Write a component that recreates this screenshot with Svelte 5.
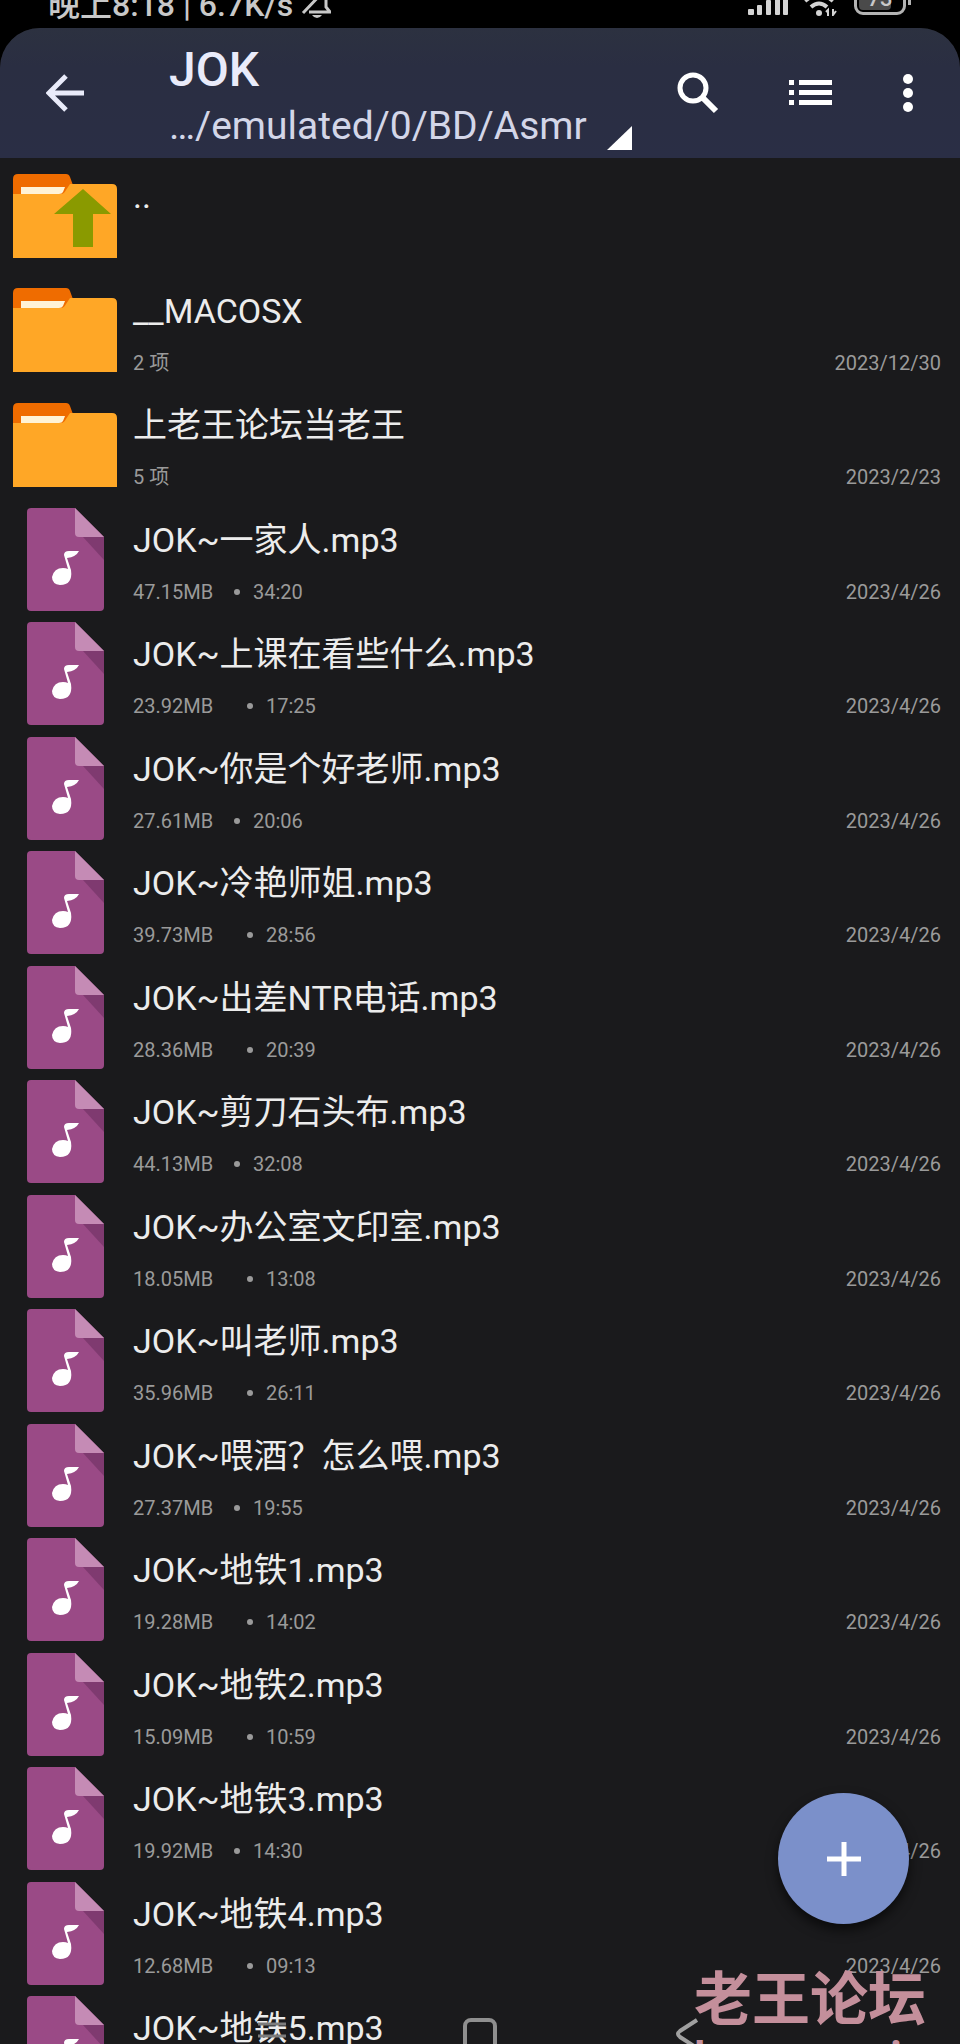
<script>
  const folders = [
    { name: '__MACOSX', count: '2 项', date: '2023/12/30' },
    { name: '上老王论坛当老王', count: '5 项', date: '2023/2/23' }
  ];

  const tracks = [
    { name: 'JOK~一家人.mp3', size: '47.15MB', time: '34:20' },
    { name: 'JOK~上课在看些什么.mp3', size: '23.92MB', time: '17:25', wide: true },
    { name: 'JOK~你是个好老师.mp3', size: '27.61MB', time: '20:06' },
    { name: 'JOK~冷艳师姐.mp3', size: '39.73MB', time: '28:56', wide: true },
    { name: 'JOK~出差NTR电话.mp3', size: '28.36MB', time: '20:39', wide: true },
    { name: 'JOK~剪刀石头布.mp3', size: '44.13MB', time: '32:08' },
    { name: 'JOK~办公室文印室.mp3', size: '18.05MB', time: '13:08', wide: true },
    { name: 'JOK~叫老师.mp3', size: '35.96MB', time: '26:11', wide: true },
    { name: 'JOK~喂酒？怎么喂.mp3', size: '27.37MB', time: '19:55' },
    { name: 'JOK~地铁1.mp3', size: '19.28MB', time: '14:02', wide: true },
    { name: 'JOK~地铁2.mp3', size: '15.09MB', time: '10:59', wide: true },
    { name: 'JOK~地铁3.mp3', size: '19.92MB', time: '14:30' },
    { name: 'JOK~地铁4.mp3', size: '12.68MB', time: '09:13', wide: true },
    { name: 'JOK~地铁5.mp3' }
  ];
  const trackDate = '2023/4/26';
</script>

{#snippet folderIcon(up)}
  <svg class="folder" viewBox="0 0 104 84" aria-hidden="true">
    <path d="M0 30V5Q0 0 5 0H53Q56 0 57 3L61 14V30Z" fill="#ef6c00" />
    <path d="M0 20H48Q51 20 53 16L57 10H99Q104 10 104 15V84H0Z" fill="#ffa726" />
    <path d="M8 13H52L50 18Q49 20 46 20H8Z" fill="#fff3d6" />
    {#if up}
      <path d="M70 15L98 40H80V73H60V40H41Z" fill="#8a9a00" />
    {/if}
  </svg>
{/snippet}

{#snippet musicIcon()}
  <svg class="music" viewBox="0 0 77 103" aria-hidden="true">
    <path d="M4 0H48L77 29V99Q77 103 73 103H4Q0 103 0 99V4Q0 0 4 0Z" fill="#9a4a86" />
    <path d="M56 29H77V52Z" fill="#7f3a70" />
    <path d="M48 0L77 29H52Q48 29 48 25Z" fill="#c58bb5" />
    <path d="M37 47Q37 43 42 43H52Q49 49 40 50L44 62Q46 77 33 77Q25 76 25 69Q27 60 36 60Q39 60 41 61L37 47Z" fill="#fff" />
  </svg>
{/snippet}

<div class="screen">
  <div class="status">
    <div class="status-side">
      <span>晚上8:18 | 6.7K/s</span>
      <svg class="bell" width="30" height="28" viewBox="0 0 30 28" aria-hidden="true">
        <path d="M8 22H29L25 17V9Q23 2 16 2M2 23L22 2" fill="none" stroke="#c8c8c8" stroke-width="3" />
        <path d="M11 25H21Q19 28 16 28Q13 28 11 25Z" fill="#c8c8c8" />
      </svg>
    </div>
    <div class="status-side right">
      <svg width="40" height="28" viewBox="0 0 40 28" aria-hidden="true" fill="#d4d4d4">
        <rect x="0" y="21" width="6" height="6" rx="1" /><rect x="9" y="17" width="5" height="10" rx="1" />
        <rect x="18" y="12" width="5" height="15" rx="1" /><rect x="27" y="6" width="5" height="21" rx="1" />
        <rect x="35" y="0" width="5" height="27" rx="1" />
      </svg>
      <svg width="34" height="28" viewBox="0 0 34 28" aria-hidden="true">
        <path d="M1 13Q15 1 29 13M7 19Q15 12 23 19" fill="none" stroke="#d4d4d4" stroke-width="4" />
        <circle cx="15" cy="25" r="3" fill="#d4d4d4" />
        <path d="M24 28V22L22 24M29 21V27L32 23" fill="none" stroke="#d4d4d4" stroke-width="2" />
      </svg>
      <span class="battery"><span class="level"></span><b>73</b></span>
    </div>
  </div>

  <header>
    <button class="back" aria-label="返回">
      <svg width="38" height="38" viewBox="0 0 38 38" aria-hidden="true">
        <path d="M38 19H4M20 2L3 19L20 36" fill="none" stroke="#e9ebfa" stroke-width="5" />
      </svg>
    </button>
    <div class="heading">
      <h1>JOK</h1>
      <button class="path">
        <span>…/emulated/0/BD/Asmr</span>
        <svg width="25" height="24" viewBox="0 0 25 24" aria-hidden="true"><path d="M25 0V24H0Z" fill="#fff" /></svg>
      </button>
    </div>
    <div class="tools">
      <button aria-label="搜索">
        <svg width="42" height="42" viewBox="0 0 42 42" aria-hidden="true">
          <circle cx="16" cy="16" r="13" fill="none" stroke="#fff" stroke-width="5" />
          <path d="M25 25L39 39" stroke="#fff" stroke-width="6" />
        </svg>
      </button>
      <button aria-label="列表视图">
        <svg width="43" height="26" viewBox="0 0 43 26" aria-hidden="true" fill="#fff">
          <path d="M0 0H5V5H0ZM10 0H43V5H10ZM0 10H5V15H0ZM10 10H43V15H10ZM0 20H5V25H0ZM10 20H43V25H10Z" />
        </svg>
      </button>
      <button aria-label="更多">
        <svg width="12" height="38" viewBox="0 0 12 38" aria-hidden="true" fill="#fff">
          <circle cx="6" cy="5" r="5" /><circle cx="6" cy="19" r="5" /><circle cx="6" cy="33" r="5" />
        </svg>
      </button>
    </div>
  </header>

  <ul>
    <li>
      <span class="icon">{@render folderIcon(true)}</span>
      <div class="info"><span class="name">..</span></div>
    </li>
    {#each folders as f}
      <li>
        <span class="icon">{@render folderIcon(false)}</span>
        <div class="info">
          <span class="name">{f.name}</span>
          <div class="meta"><span>{f.count}</span><time>{f.date}</time></div>
        </div>
      </li>
    {/each}
    {#each tracks as t}
      <li>
        <span class="icon">{@render musicIcon()}</span>
        <div class="info">
          <span class="name">{t.name}</span>
          {#if t.size}
            <div class="meta">
              <span class="size" class:wide={t.wide}>{t.size}</span>
              <i class="dot"></i>
              <span>{t.time}</span>
              <time>{trackDate}</time>
            </div>
          {/if}
        </div>
      </li>
    {/each}
  </ul>

  <nav>
    <button class="recents" aria-label="最近任务">
      <svg width="34" height="34" viewBox="0 0 34 34" aria-hidden="true"><path d="M4 6H32M4 18H32M4 30H32" stroke="#7c7c7c" stroke-width="3" /></svg>
    </button>
    <button class="home" aria-label="主屏幕">
      <svg width="34" height="34" viewBox="0 0 34 34" aria-hidden="true"><rect x="2" y="2" width="30" height="30" rx="6" fill="none" stroke="#8f8f8f" stroke-width="4" /></svg>
    </button>
    <button class="prev" aria-label="上一步">
      <svg width="34" height="34" viewBox="0 0 34 34" aria-hidden="true"><path d="M25 2L8 13Q4 16 8 19L25 30" fill="none" stroke="#a0a0a0" stroke-width="4" /></svg>
    </button>
  </nav>

  <button class="fab" aria-label="新建">
    <svg width="34" height="34" viewBox="0 0 34 34" aria-hidden="true"><path d="M17 0V34M0 17H34" stroke="#fff" stroke-width="5" /></svg>
  </button>

  <div class="mark"><span>老王论坛</span><small>laowang.vip</small></div>
</div>

<style>
  :global(body) {
    background: #1a1a1c;
  }
  .screen {
    position: relative;
    height: 100vh;
    overflow: hidden;
    background: #1a1a1c;
    color: #ececec;
    font-family: Roboto, "Noto Sans CJK SC", sans-serif;
  }
  button {
    display: flex;
    align-items: center;
    justify-content: center;
    padding: 0;
    border: 0;
    background: none;
    color: inherit;
    font: inherit;
  }
  svg {
    display: block;
    flex: none;
  }
  .status {
    display: flex;
    align-items: flex-end;
    justify-content: space-between;
    height: 28px;
    padding: 0 54px 0 48px;
    background: #000;
    color: #c8c8c8;
    font-size: 32px;
    font-weight: 500;
    line-height: 44px;
  }
  .status-side {
    display: flex;
    align-items: flex-end;
    gap: 8px;
    white-space: nowrap;
  }
  .status-side > svg {
    margin-bottom: 12px;
  }
  .status-side > .bell {
    margin-bottom: 10px;
  }
  .status-side > span:first-child {
    margin-bottom: 1px;
  }
  .right {
    gap: 16px;
  }
  .right .battery {
    position: relative;
    display: flex;
    justify-content: center;
    width: 46px;
    height: 26px;
    margin-bottom: 13px;
    border: 3px solid #b4b4b4;
    border-radius: 9px;
    font-size: 22px;
    line-height: 26px;
  }
  .battery b {
    position: relative;
    font-weight: 500;
  }
  .battery::after {
    content: "";
    position: absolute;
    right: -8px;
    bottom: 7px;
    width: 3px;
    height: 10px;
    background: #b4b4b4;
  }
  .level {
    position: absolute;
    inset: 2px 12px 2px 2px;
    background: #4a4a4a;
    border-radius: 4px;
  }
  header {
    display: flex;
    align-items: center;
    height: 130px;
    padding: 0 46px;
    border-radius: 40px 40px 0 0;
    background: linear-gradient(#2c3140, #2a2e42 30%, #2a2e45);
    box-shadow: 0 -40px 0 #000;
    color: #e9ebfa;
  }
  .heading {
    display: flex;
    flex: 1;
    flex-direction: column;
    gap: 4px;
    margin-left: 85px;
    padding-top: 6px;
  }
  h1 {
    margin: 0;
    font-size: 48px;
    font-weight: 500;
    line-height: 56px;
  }
  .path {
    align-items: flex-end;
    justify-content: flex-start;
    gap: 20px;
    color: #d3d6e8;
    font-size: 39px;
    line-height: 48px;
  }
  .tools {
    display: flex;
    align-items: center;
    gap: 70px;
  }
  ul {
    margin: 0;
    padding: 0;
    list-style: none;
  }
  li {
    display: flex;
    gap: 16px;
    box-sizing: border-box;
    height: 115px;
    padding: 0 19px 0 13px;
  }
  li:nth-child(even) {
    height: 114px;
  }
  .icon {
    display: flex;
    align-items: center;
    justify-content: center;
    width: 104px;
  }
  .folder {
    width: 104px;
    height: 84px;
  }
  .music {
    width: 77px;
    height: 103px;
  }
  .info {
    display: flex;
    flex: 1;
    flex-direction: column;
    gap: 16px;
    padding-top: 16px;
  }
  .name {
    font-size: 34px;
    line-height: 44px;
  }
  .meta {
    display: flex;
    align-items: center;
    color: #9a9a9a;
    font-size: 20px;
    line-height: 28px;
  }
  .size {
    width: 101px;
  }
  .size.wide {
    width: 114px;
  }
  .dot {
    width: 6px;
    height: 6px;
    margin-right: 13px;
    border-radius: 50%;
    background: #9a9a9a;
  }
  time {
    margin-left: auto;
  }
  nav {
    position: absolute;
    right: 0;
    bottom: -8px;
    left: 0;
    display: flex;
    justify-content: space-between;
    padding: 0 254px;
  }
  .fab {
    position: absolute;
    right: 51px;
    bottom: 120px;
    width: 131px;
    height: 131px;
    border-radius: 50%;
    background: #7b90ca;
    box-shadow: 0 6px 12px rgba(0, 0, 0, 0.6);
  }
  .mark {
    position: absolute;
    right: 34px;
    bottom: -38px;
    display: flex;
    flex-direction: column;
    color: #c48f9b;
    font-size: 58px;
    font-weight: 700;
    line-height: 64px;
  }
  .mark small {
    font-size: 43px;
    line-height: 50px;
  }
</style>
